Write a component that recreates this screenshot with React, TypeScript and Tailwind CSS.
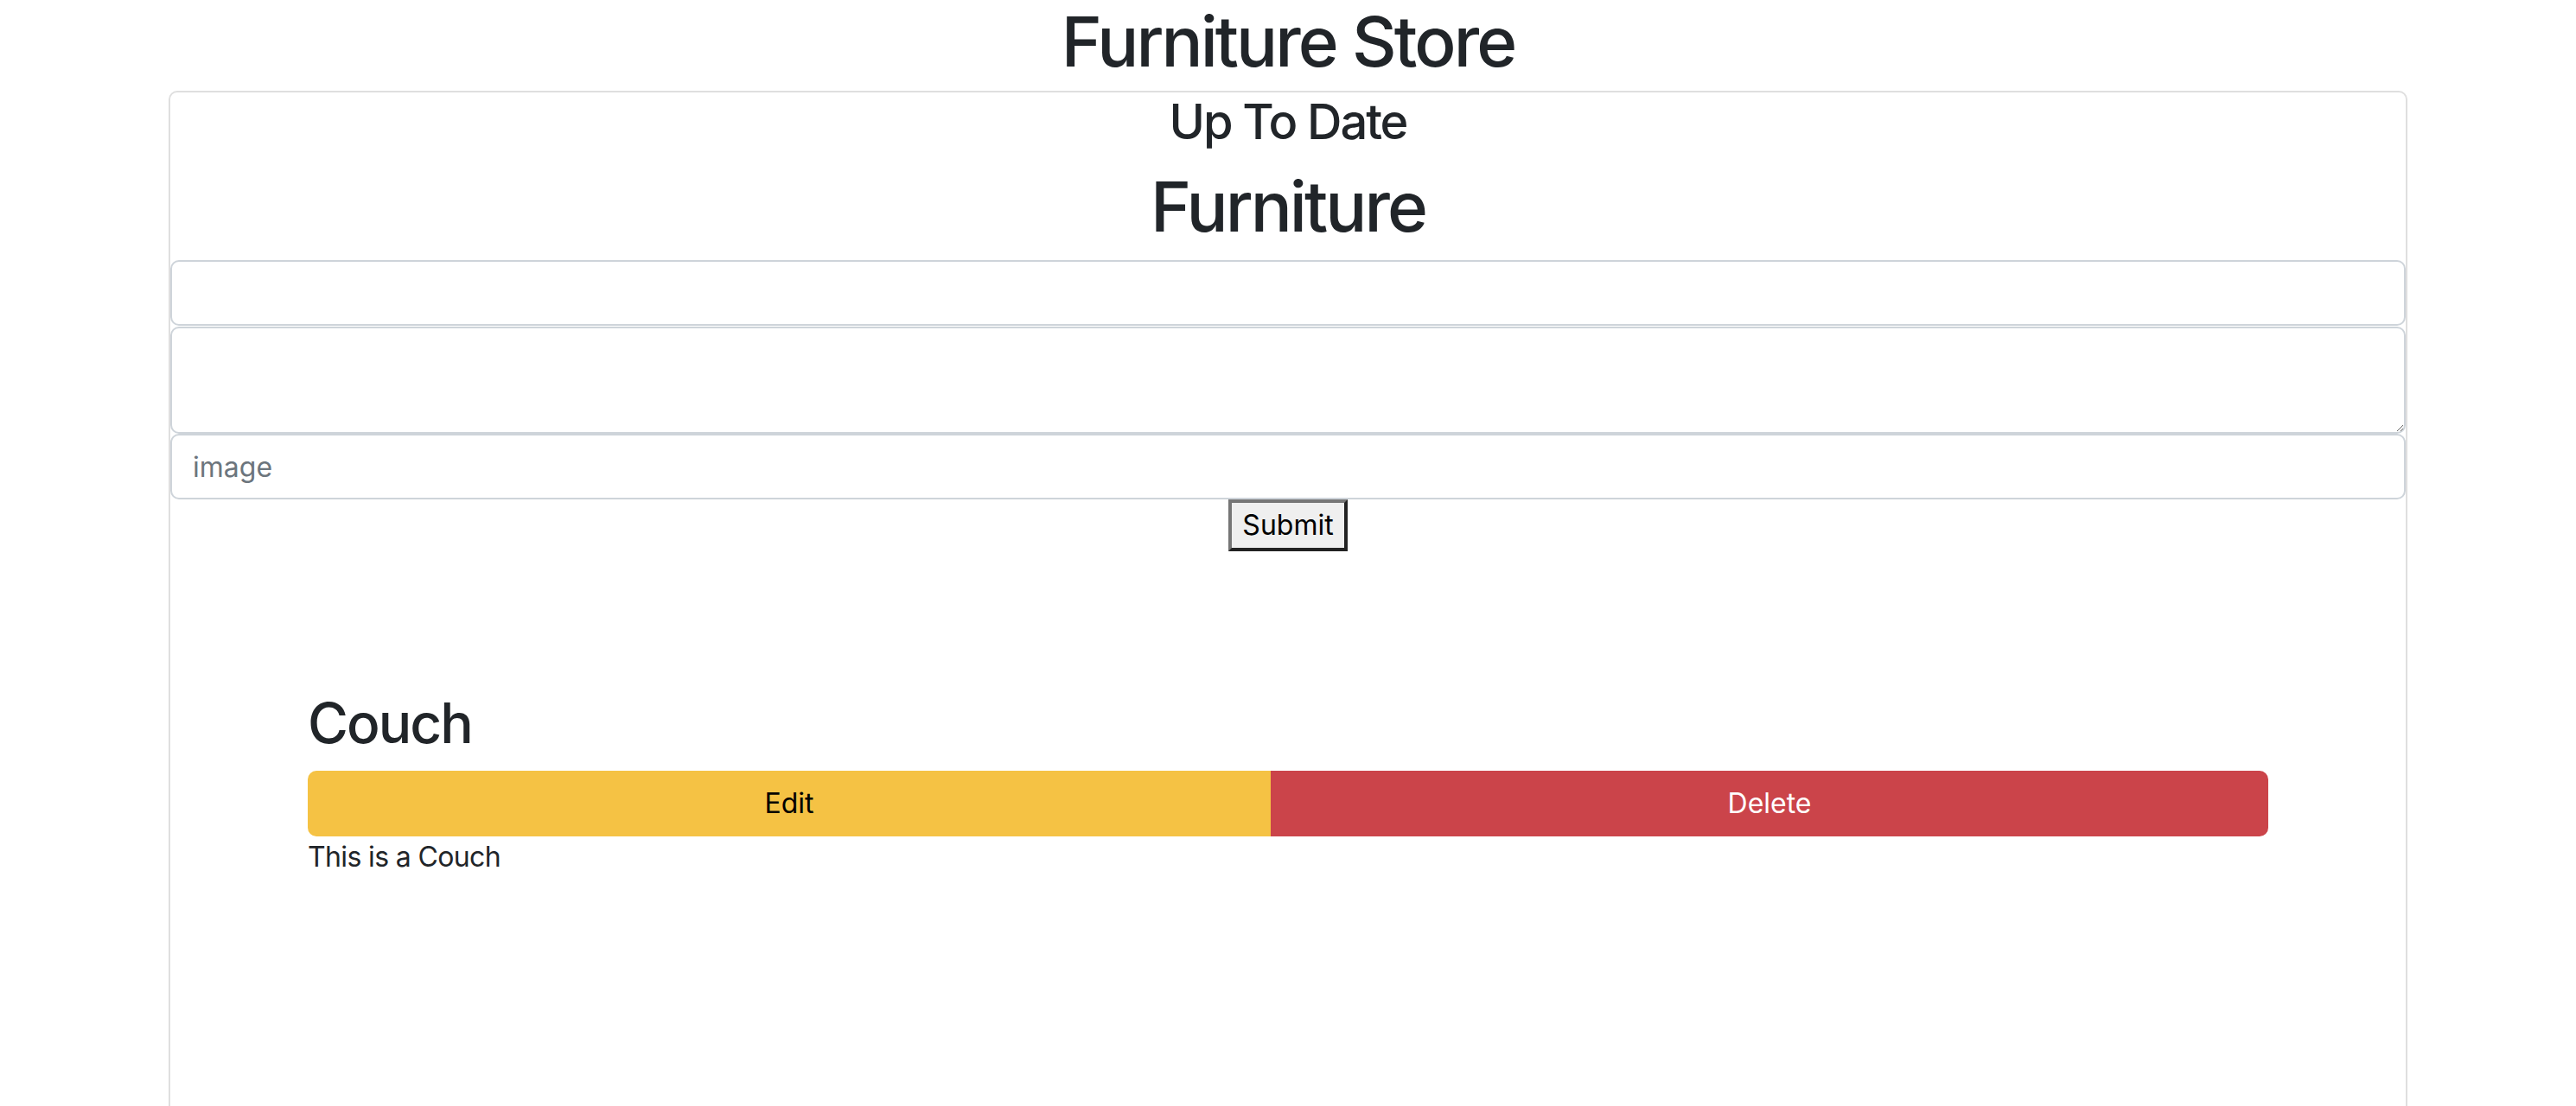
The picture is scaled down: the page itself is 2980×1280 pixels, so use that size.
import React from "react";

const font = { fontFamily: "Inter, 'Noto Sans', sans-serif" };

function FurnitureItem({ name, description }: { name: string; description: string }) {
  return (
    <div className="mx-auto w-[2268px] mt-[161px]">
      <h2 className="text-[64px] leading-[1.2] font-medium tracking-[-0.03em] mb-[16px]">{name}</h2>
      <div className="flex">
        <button className="flex-auto rounded-l-[10px] bg-[#f5c244] border-2 border-[#f5c244] px-[24px] py-[12px] text-[32px] leading-[48px] text-black">
          Edit
        </button>
        <button className="flex-auto rounded-r-[10px] bg-[#cb444a] border-2 border-[#cb444a] px-[24px] py-[12px] text-[32px] leading-[48px] text-white">
          Delete
        </button>
      </div>
      <p className="text-[32px] leading-[48px] tracking-[-0.02em]">{description}</p>
    </div>
  );
}

export default function App() {
  return (
    <div className="min-h-screen bg-white text-[#212529] overflow-hidden" style={font}>
      <h1 className="text-center text-[80px] leading-[96px] font-medium tracking-[-0.037em] mb-[9px]">
        Furniture Store
      </h1>

      <div className="mx-auto w-[2590px] h-[1400px] border-2 border-[#dfdfdf] rounded-[10px]">
        <h3 className="text-center text-[56px] leading-[1.2] font-medium tracking-[-0.037em] mt-px mb-[16px]">
          Up To Date
        </h3>
        <h1 className="text-center text-[80px] leading-[96px] font-medium tracking-[-0.037em] mb-[14px]">
          Furniture
        </h1>

        <form className="flex flex-col" onSubmit={(e) => e.preventDefault()}>
          <input
            type="text"
            className="block w-full h-[76px] border-2 border-[#ced4da] rounded-[10px] px-[24px] text-[32px] outline-none"
          />
          <textarea
            rows={2}
            className="block w-full h-[124px] mt-px border-2 border-[#ced4da] rounded-[10px] px-[24px] py-[12px] text-[32px] leading-[48px] outline-none"
          />
          <input
            type="text"
            placeholder="image"
            className="block w-full h-[76px] border-2 border-[#ced4da] rounded-[10px] px-[24px] text-[32px] outline-none placeholder:text-[#6c757d]"
          />
          <div className="text-center">
            <button
              type="submit"
              className="bg-[#efefef] border-4 border-t-[#767676] border-l-[#767676] border-r-[#222222] border-b-[#222222] px-[12px] py-[2px] text-[32px] leading-[48px] text-black"
            >
              Submit
            </button>
          </div>
        </form>

        <FurnitureItem name="Couch" description="This is a Couch" />
      </div>
    </div>
  );
}
